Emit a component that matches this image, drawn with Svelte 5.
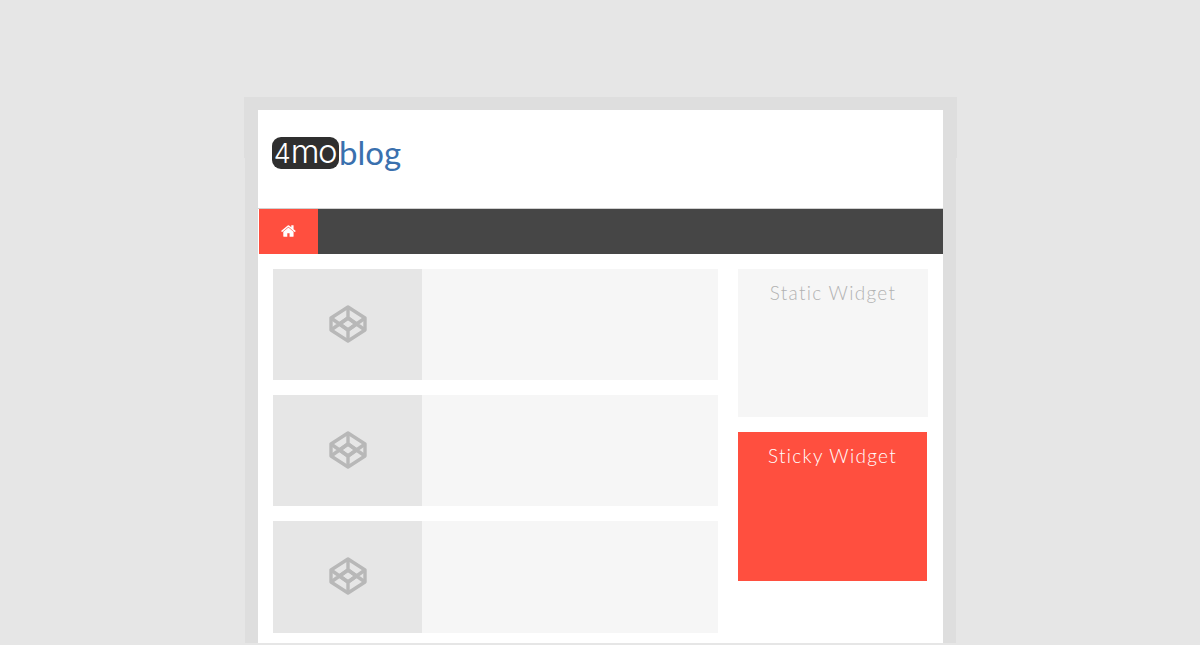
<script lang="ts">
  const posts = [1, 2, 3];
</script>

<div class="frame">
  <div class="sheet">
    <header class="masthead">
      <div class="logo">
        <span class="logo-badge"><span class="digit">4</span><span class="letters">mo</span></span><span class="logo-word">blog</span>
      </div>
    </header>

    <nav class="navbar">
      <span class="home">
        <svg viewBox="0 0 1792 1792" width="16" height="16" aria-hidden="true">
          <path fill="#fff" d="M1408 992v480q0 26-19 45t-45 19h-384v-384h-256v384h-384q-26 0-45-19t-19-45v-480q0-1 .5-3t.5-3l575-474 575 474q1 2 1 6zm223-69l-62 74q-8 9-21 11h-3q-13 0-21-7l-692-577-692 577q-12 8-24 7-13-2-21-11l-62-74q-8-10-7-23.500t11-21.500l719-599q32-26 76-26t76 26l244 204v-195q0-14 9-23t23-9h192q14 0 23 9t9 23v408l219 182q10 8 11 21.500t-7 23.500z" />
        </svg>
      </span>
    </nav>

    <div class="content">
      <main class="posts">
        {#each posts as post (post)}
          <article class="post">
            <div class="thumb">
              <svg viewBox="0 0 38 38" width="38" height="38" aria-hidden="true">
                <g fill="none" stroke="#b8b8b8" stroke-width="3.4" stroke-linejoin="round">
                  <path d="M19 2 36 13V25L19 36 2 25V13Z" />
                  <path d="M19 13 27.500 19 19 25 10.500 19Z" />
                  <path d="M19 2V13M19 25V36M2 13 19 25 36 13M2 25 19 13 36 25" />
                </g>
              </svg>
            </div>
            <div class="excerpt"></div>
          </article>
        {/each}
      </main>

      <aside class="sidebar">
        <section class="widget static">Static Widget</section>
        <section class="widget sticky">Sticky Widget</section>
      </aside>
    </div>
  </div>
</div>

<style>
  :global(body) {
    background: #e6e6e6;
    overflow: hidden;
  }

  .frame {
    position: relative;
    width: 711px;
    height: 546px;
    box-sizing: border-box;
    margin: 97px 0 0 245px;
    padding: 13px 13px 0;
    background: #dedede;
  }

  /* the top of the frame sits a pixel wider than the rest */
  .frame::before {
    content: "";
    position: absolute;
    top: 0;
    left: -1px;
    right: -1px;
    height: 61px;
    background: #dedede;
  }

  .sheet {
    position: relative;
    background: #fff;
    height: 535px;
  }

  .masthead {
    height: 99px;
    box-sizing: border-box;
    padding: 27px 0 0 14px;
    border-bottom: 1px solid #d0d0d0;
  }

  .logo {
    display: flex;
    align-items: flex-start;
    height: 32px;
  }

  .logo-badge {
    width: 67px;
    height: 32px;
    display: flex;
    align-items: baseline;
    justify-content: center;
    box-sizing: border-box;
    padding-right: 1px;
    border-radius: 9px;
    background: #2f2f2f;
    color: #fff;
    font-family: "Inter", sans-serif;
    font-weight: 300;
    line-height: 29px;
  }

  .digit {
    font-size: 27px;
  }

  .letters {
    font-size: 33px;
    letter-spacing: -1.5px;
  }

  .logo-word {
    color: #3a70ae;
    font-family: "Lato", sans-serif;
    font-weight: 400;
    font-size: 33px;
    line-height: 32px;
    margin-top: -1px;
  }

  .navbar {
    height: 45px;
    margin-left: 1px;
    background: #464646;
    display: flex;
  }

  .home {
    width: 59px;
    box-sizing: border-box;
    padding-bottom: 2px;
    background: #ff4f3f;
    display: flex;
    align-items: center;
    justify-content: center;
  }

  .content {
    display: flex;
    padding: 15px 15px 0;
    gap: 20px;
  }

  .posts {
    width: 445px;
    display: flex;
    flex-direction: column;
    gap: 15px;
  }

  .post {
    display: flex;
    height: 111.2px;
    background: #f6f6f6;
  }

  .thumb {
    width: 149px;
    box-sizing: border-box;
    padding-bottom: 2px;
    background: #e6e6e6;
    display: flex;
    align-items: center;
    justify-content: center;
  }

  .excerpt {
    flex: 1;
  }

  .sidebar {
    width: 190px;
    display: flex;
    flex-direction: column;
    gap: 15px;
  }

  .widget {
    box-sizing: border-box;
    text-align: center;
    font-family: "Lato", sans-serif;
    font-weight: 300;
    font-size: 19px;
    line-height: 22px;
    letter-spacing: 1.3px;
  }

  .static {
    height: 148px;
    padding-top: 13px;
    background: #f6f6f6;
    color: #b2b2b2;
  }

  .sticky {
    width: 189px;
    height: 149px;
    padding-top: 13px;
    background: #ff4f3f;
    color: #fff;
  }
</style>
